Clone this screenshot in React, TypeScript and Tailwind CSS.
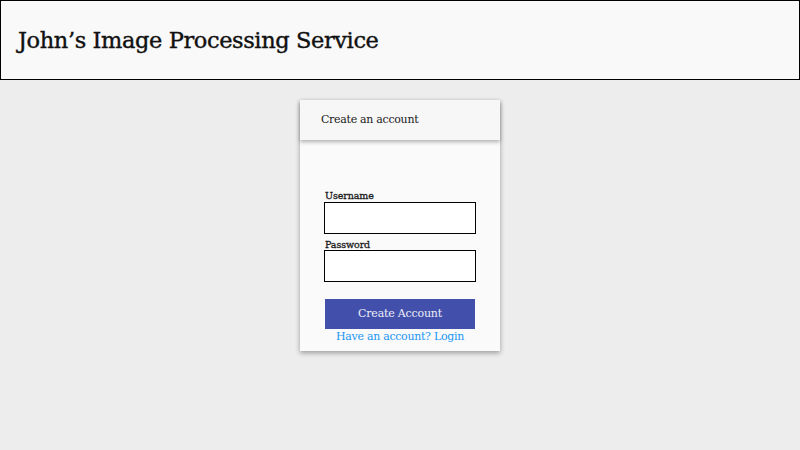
export default function App() {
  return (
    <div className="min-h-[450px] w-full bg-[#ededed] font-['DejaVu_Serif',serif] text-[#1a1a1a]">
      <header className="flex h-20 items-center border border-black bg-[#f9f9f9] px-[17px]">
        <h1 className="pt-px text-[22.5px] tracking-[-0.4px] text-[#111] [-webkit-text-stroke:0.4px_#111]">
          John’s Image Processing Service
        </h1>
      </header>

      <div className="flex justify-center pt-5">
        <div className="w-[200px] bg-[#fafafa] shadow-[0_2px_5px_rgba(0,0,0,0.35)]">
          <div className="relative z-10 flex h-10 items-center bg-[#f7f7f7] px-[21px] pt-px shadow-[0_2px_4px_rgba(0,0,0,0.3)]">
            <span className="text-[11px] tracking-[-0.3px]">Create an account</span>
          </div>

          <form className="flex flex-col px-6 pt-[50px] pb-[7px]">
            <label className="pl-px text-[9.5px] leading-[12px] tracking-[-0.1px] [-webkit-text-stroke:0.3px_#1a1a1a]">
              Username
            </label>
            <input type="text" className="h-8 w-[152px] border border-black bg-white" />
            <label className="mt-[5px] pl-px text-[9.5px] leading-[11px] tracking-[-0.1px] [-webkit-text-stroke:0.3px_#1a1a1a]">
              Password
            </label>
            <input type="password" className="h-8 w-[152px] border border-black bg-white" />
            <button
              type="button"
              className="mx-px mt-[17px] h-[30px] bg-[#4350ab] text-[11px] tracking-[-0.2px] text-[#eceef8]"
            >
              Create Account
            </button>
            <a className="mt-px text-center text-[11px] leading-[14px] tracking-[-0.3px] text-[#2196f3]">
              Have an account? Login
            </a>
          </form>
        </div>
      </div>
    </div>
  );
}
